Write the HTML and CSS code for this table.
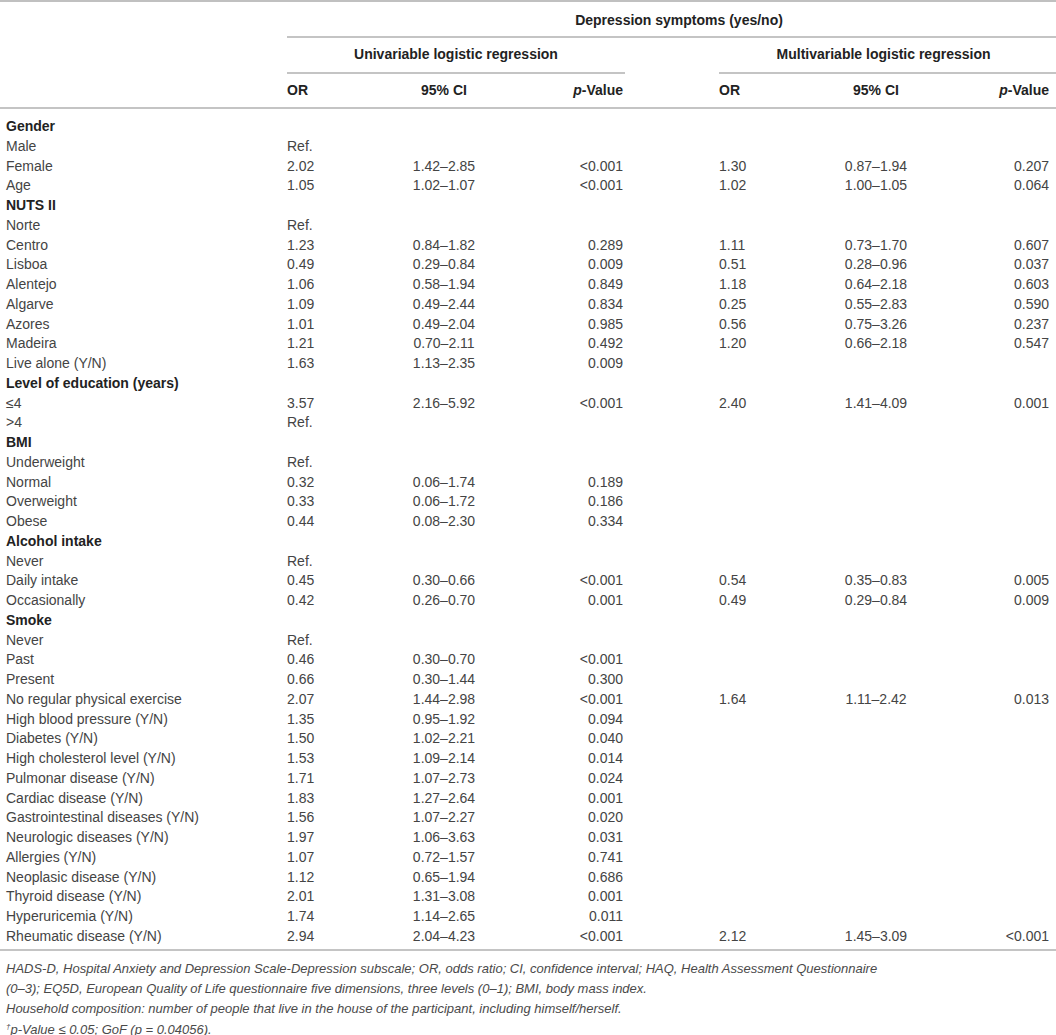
FILE: index.html
```html
<!DOCTYPE html>
<html lang="en">
  <head>
    <meta charset="UTF-8" />
    <meta name="viewport" content="width=device-width, initial-scale=1.0" />
    <title>Depression symptoms - logistic regression</title>
    <link rel="stylesheet" href="styles.css">
  </head>
  <body>
    <table class="results">
      <colgroup>
        <col class="c-label">
        <col class="c-or1">
        <col class="c-ci1">
        <col class="c-p1">
        <col class="c-gap">
        <col class="c-or2">
        <col class="c-ci2">
        <col class="c-p2">
      </colgroup>
      <thead>
        <tr class="h-top">
          <th></th>
          <th colspan="7" class="span main-span">Depression symptoms (yes/no)</th>
        </tr>
        <tr class="h-mid">
          <th></th>
          <th colspan="3" class="span">Univariable logistic regression</th>
          <th></th>
          <th colspan="3" class="span multi-span">Multivariable logistic regression</th>
        </tr>
        <tr class="h-cols">
          <th></th>
          <th class="or">OR</th>
          <th class="ci">95% CI</th>
          <th class="p"><i>p</i>-Value</th>
          <th></th>
          <th class="or">OR</th>
          <th class="ci">95% CI</th>
          <th class="p last"><i>p</i>-Value</th>
        </tr>
      </thead>
      <tbody>
        <tr class="group"><td colspan="8">Gender</td></tr>
        <tr><td>Male</td><td class="or">Ref.</td><td></td><td></td><td></td><td></td><td></td><td></td></tr>
        <tr><td>Female</td><td class="or">2.02</td><td class="ci">1.42–2.85</td><td class="p">&lt;0.001</td><td></td><td class="or">1.30</td><td class="ci">0.87–1.94</td><td class="p last">0.207</td></tr>
        <tr><td>Age</td><td class="or">1.05</td><td class="ci">1.02–1.07</td><td class="p">&lt;0.001</td><td></td><td class="or">1.02</td><td class="ci">1.00–1.05</td><td class="p last">0.064</td></tr>
        <tr class="group"><td colspan="8">NUTS II</td></tr>
        <tr><td>Norte</td><td class="or">Ref.</td><td></td><td></td><td></td><td></td><td></td><td></td></tr>
        <tr><td>Centro</td><td class="or">1.23</td><td class="ci">0.84–1.82</td><td class="p">0.289</td><td></td><td class="or">1.11</td><td class="ci">0.73–1.70</td><td class="p last">0.607</td></tr>
        <tr><td>Lisboa</td><td class="or">0.49</td><td class="ci">0.29–0.84</td><td class="p">0.009</td><td></td><td class="or">0.51</td><td class="ci">0.28–0.96</td><td class="p last">0.037</td></tr>
        <tr><td>Alentejo</td><td class="or">1.06</td><td class="ci">0.58–1.94</td><td class="p">0.849</td><td></td><td class="or">1.18</td><td class="ci">0.64–2.18</td><td class="p last">0.603</td></tr>
        <tr><td>Algarve</td><td class="or">1.09</td><td class="ci">0.49–2.44</td><td class="p">0.834</td><td></td><td class="or">0.25</td><td class="ci">0.55–2.83</td><td class="p last">0.590</td></tr>
        <tr><td>Azores</td><td class="or">1.01</td><td class="ci">0.49–2.04</td><td class="p">0.985</td><td></td><td class="or">0.56</td><td class="ci">0.75–3.26</td><td class="p last">0.237</td></tr>
        <tr><td>Madeira</td><td class="or">1.21</td><td class="ci">0.70–2.11</td><td class="p">0.492</td><td></td><td class="or">1.20</td><td class="ci">0.66–2.18</td><td class="p last">0.547</td></tr>
        <tr><td>Live alone (Y/N)</td><td class="or">1.63</td><td class="ci">1.13–2.35</td><td class="p">0.009</td><td></td><td></td><td></td><td></td></tr>
        <tr class="group"><td colspan="8">Level of education (years)</td></tr>
        <tr><td>≤4</td><td class="or">3.57</td><td class="ci">2.16–5.92</td><td class="p">&lt;0.001</td><td></td><td class="or">2.40</td><td class="ci">1.41–4.09</td><td class="p last">0.001</td></tr>
        <tr><td>&gt;4</td><td class="or">Ref.</td><td></td><td></td><td></td><td></td><td></td><td></td></tr>
        <tr class="group"><td colspan="8">BMI</td></tr>
        <tr><td>Underweight</td><td class="or">Ref.</td><td></td><td></td><td></td><td></td><td></td><td></td></tr>
        <tr><td>Normal</td><td class="or">0.32</td><td class="ci">0.06–1.74</td><td class="p">0.189</td><td></td><td></td><td></td><td></td></tr>
        <tr><td>Overweight</td><td class="or">0.33</td><td class="ci">0.06–1.72</td><td class="p">0.186</td><td></td><td></td><td></td><td></td></tr>
        <tr><td>Obese</td><td class="or">0.44</td><td class="ci">0.08–2.30</td><td class="p">0.334</td><td></td><td></td><td></td><td></td></tr>
        <tr class="group"><td colspan="8">Alcohol intake</td></tr>
        <tr><td>Never</td><td class="or">Ref.</td><td></td><td></td><td></td><td></td><td></td><td></td></tr>
        <tr><td>Daily intake</td><td class="or">0.45</td><td class="ci">0.30–0.66</td><td class="p">&lt;0.001</td><td></td><td class="or">0.54</td><td class="ci">0.35–0.83</td><td class="p last">0.005</td></tr>
        <tr><td>Occasionally</td><td class="or">0.42</td><td class="ci">0.26–0.70</td><td class="p">0.001</td><td></td><td class="or">0.49</td><td class="ci">0.29–0.84</td><td class="p last">0.009</td></tr>
        <tr class="group"><td colspan="8">Smoke</td></tr>
        <tr><td>Never</td><td class="or">Ref.</td><td></td><td></td><td></td><td></td><td></td><td></td></tr>
        <tr><td>Past</td><td class="or">0.46</td><td class="ci">0.30–0.70</td><td class="p">&lt;0.001</td><td></td><td></td><td></td><td></td></tr>
        <tr><td>Present</td><td class="or">0.66</td><td class="ci">0.30–1.44</td><td class="p">0.300</td><td></td><td></td><td></td><td></td></tr>
        <tr><td>No regular physical exercise</td><td class="or">2.07</td><td class="ci">1.44–2.98</td><td class="p">&lt;0.001</td><td></td><td class="or">1.64</td><td class="ci">1.11–2.42</td><td class="p last">0.013</td></tr>
        <tr><td>High blood pressure (Y/N)</td><td class="or">1.35</td><td class="ci">0.95–1.92</td><td class="p">0.094</td><td></td><td></td><td></td><td></td></tr>
        <tr><td>Diabetes (Y/N)</td><td class="or">1.50</td><td class="ci">1.02–2.21</td><td class="p">0.040</td><td></td><td></td><td></td><td></td></tr>
        <tr><td>High cholesterol level (Y/N)</td><td class="or">1.53</td><td class="ci">1.09–2.14</td><td class="p">0.014</td><td></td><td></td><td></td><td></td></tr>
        <tr><td>Pulmonar disease (Y/N)</td><td class="or">1.71</td><td class="ci">1.07–2.73</td><td class="p">0.024</td><td></td><td></td><td></td><td></td></tr>
        <tr><td>Cardiac disease (Y/N)</td><td class="or">1.83</td><td class="ci">1.27–2.64</td><td class="p">0.001</td><td></td><td></td><td></td><td></td></tr>
        <tr><td>Gastrointestinal diseases (Y/N)</td><td class="or">1.56</td><td class="ci">1.07–2.27</td><td class="p">0.020</td><td></td><td></td><td></td><td></td></tr>
        <tr><td>Neurologic diseases (Y/N)</td><td class="or">1.97</td><td class="ci">1.06–3.63</td><td class="p">0.031</td><td></td><td></td><td></td><td></td></tr>
        <tr><td>Allergies (Y/N)</td><td class="or">1.07</td><td class="ci">0.72–1.57</td><td class="p">0.741</td><td></td><td></td><td></td><td></td></tr>
        <tr><td>Neoplasic disease (Y/N)</td><td class="or">1.12</td><td class="ci">0.65–1.94</td><td class="p">0.686</td><td></td><td></td><td></td><td></td></tr>
        <tr><td>Thyroid disease (Y/N)</td><td class="or">2.01</td><td class="ci">1.31–3.08</td><td class="p">0.001</td><td></td><td></td><td></td><td></td></tr>
        <tr><td>Hyperuricemia (Y/N)</td><td class="or">1.74</td><td class="ci">1.14–2.65</td><td class="p">0.011</td><td></td><td></td><td></td><td></td></tr>
        <tr><td>Rheumatic disease (Y/N)</td><td class="or">2.94</td><td class="ci">2.04–4.23</td><td class="p">&lt;0.001</td><td></td><td class="or">2.12</td><td class="ci">1.45–3.09</td><td class="p last">&lt;0.001</td></tr>
      </tbody>
    </table>

    <div class="notes">
      HADS-D, Hospital Anxiety and Depression Scale-Depression subscale; OR, odds ratio; CI, confidence interval; HAQ, Health Assessment Questionnaire<br>
      (0–3); EQ5D, European Quality of Life questionnaire five dimensions, three levels (0–1); BMI, body mass index.<br>
      Household composition: number of people that live in the house of the participant, including himself/herself.<br>
      <sup>†</sup>p-Value ≤ 0.05; GoF (p = 0.04056).
    </div>
  </body>
</html>
```

FILE: styles.css
```css
body {
  font-family: "Liberation Sans", Arial, sans-serif;
  margin: 0;
  padding: 0;
  background-color: #fff;
  color: #444;
}
.results {
  width: 1056px;
  table-layout: fixed;
  border-collapse: collapse;
  border-top: 2px solid #c0c0c0;
  font-size: 14px;
}
.c-label { width: 287px; }
.c-or1 { width: 93px; }
.c-ci1 { width: 128px; }
.c-p1 { width: 117px; }
.c-gap { width: 94px; }
.c-or2 { width: 93px; }
.c-ci2 { width: 128px; }
.c-p2 { width: 116px; }
th {
  font-weight: bold;
  color: #222;
  line-height: 17px;
  padding: 8px 0 9px 0;
}
.h-top th {
  padding: 10px 0 7px 0;
}
.h-cols th {
  padding: 8px 0 8px 0;
  border-bottom: 2px solid #c4c4c4;
}
th.span {
  text-align: center;
  border-bottom: 2px solid #c4c4c4;
}
th.main-span {
  padding-left: 15px;
}
th.multi-span {
  padding-right: 8px;
}
td {
  padding: 0;
  line-height: 19.75px;
  white-space: nowrap;
}
td:first-child {
  padding-left: 6px;
}
.or {
  text-align: left;
}
.ci {
  text-align: center;
}
th.p,
td.p {
  text-align: right;
  padding-right: 2px;
}
th.p.last,
td.p.last {
  padding-right: 7px;
}
.group td {
  font-weight: bold;
  color: #222;
}
tbody tr:first-child td {
  padding-top: 8px;
}
tbody tr:last-child td {
  padding-bottom: 2px;
  border-bottom: 2px solid #c4c4c4;
}
.notes {
  margin-top: 8px;
  padding-left: 6px;
  font-size: 13px;
  font-style: italic;
  line-height: 20.4px;
  color: #4a4a4a;
}
.notes sup {
  font-size: 8px;
  vertical-align: 5px;
  line-height: 0;
}
```
